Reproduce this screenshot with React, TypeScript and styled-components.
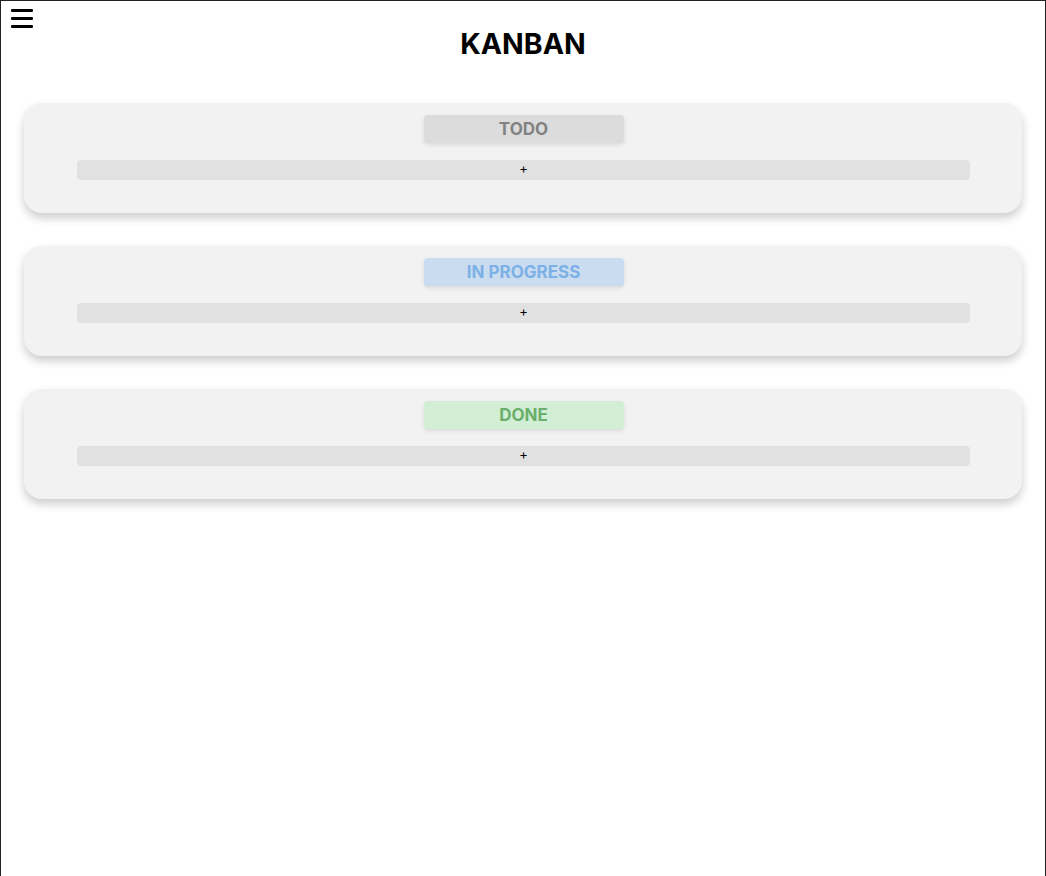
import styled, { createGlobalStyle } from 'styled-components'

type Status = 'todo' | 'progress' | 'done'

interface Column {
  id: Status
  title: string
}

const columns: Column[] = [
  { id: 'todo', title: 'TODO' },
  { id: 'progress', title: 'IN PROGRESS' },
  { id: 'done', title: 'DONE' },
]

const tones: Record<Status, { bg: string; fg: string }> = {
  todo: { bg: '#dcdcdc', fg: '#828282' },
  progress: { bg: '#c9dcf0', fg: '#7db0e6' },
  done: { bg: '#d2eed4', fg: '#6aae6c' },
}

const GlobalStyle = createGlobalStyle`
  html, body {
    margin: 0;
    padding: 0;
    background: #ffffff;
  }

  body {
    font-family: Inter, "Noto Sans", sans-serif;
  }
`

export default function App() {
  return (
    <>
      <GlobalStyle />
      <Page>
        <MenuButton aria-label="menu">
          <span />
          <span />
          <span />
        </MenuButton>
        <Title>KANBAN</Title>
        <Board>
          {columns.map((col) => (
            <Lane key={col.id}>
              <LaneLabel $status={col.id}>{col.title}</LaneLabel>
              <AddButton>+</AddButton>
            </Lane>
          ))}
        </Board>
      </Page>
    </>
  )
}

const Page = styled.div`
  position: relative;
  box-sizing: border-box;
  min-height: 100vh;
  border: 1px solid #222;
  border-bottom: none;
  padding: 0 23px;
`

const MenuButton = styled.button`
  position: absolute;
  top: 8px;
  left: 10px;
  display: flex;
  flex-direction: column;
  gap: 5px;
  padding: 0;
  border: none;
  background: none;
  cursor: pointer;

  > span {
    display: block;
    width: 22px;
    height: 3px;
    border-radius: 1px;
    background: #000;
  }
`

const Title = styled.h1`
  margin: 0;
  padding: 24px 0 0;
  height: 78px;
  box-sizing: border-box;
  text-align: center;
  font-size: 28.5px;
  font-weight: 700;
  line-height: 38px;
  color: #000;
`

const Board = styled.div`
  display: flex;
  flex-direction: column;
  gap: 33px;
  padding-top: 24px;
`

const Lane = styled.section`
  display: flex;
  flex-direction: column;
  align-items: center;
  gap: 17px;
  height: 110px;
  box-sizing: border-box;
  padding: 12px 52px 33px 53px;
  border-radius: 18px;
  background: #f2f2f2;
  box-shadow: 0 5px 10px rgba(0, 0, 0, 0.2);
`

const LaneLabel = styled.h2<{ $status: Status }>`
  margin: 0;
  width: 200px;
  height: 28px;
  border-radius: 4px;
  background: ${(p) => tones[p.$status].bg};
  color: ${(p) => tones[p.$status].fg};
  box-shadow: 0 2px 4px rgba(0, 0, 0, 0.1);
  font-size: 17px;
  font-weight: 700;
  line-height: 28px;
  text-align: center;
`

const AddButton = styled.button`
  box-sizing: border-box;
  width: 100%;
  height: 20px;
  padding: 0 0 3px;
  border: none;
  border-radius: 4px;
  background: #e1e1e1;
  color: #000;
  font-family: Inter, "Noto Sans", sans-serif;
  font-size: 13px;
  line-height: 17px;
  cursor: pointer;
`
